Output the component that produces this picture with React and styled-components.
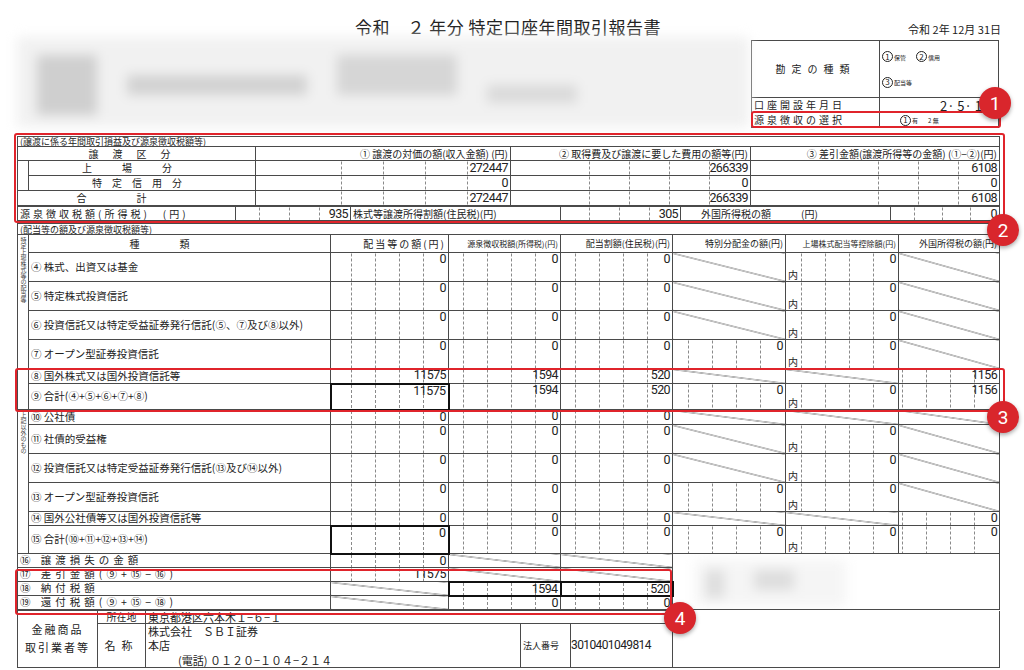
import React from 'react';
import styled, { createGlobalStyle, css } from 'styled-components';

const Global = createGlobalStyle`
  body { margin: 0; background: #fff; }
  * { box-sizing: border-box; }
`;

const font = `"Noto Sans CJK JP", "Noto Sans", sans-serif`;
const line = '#4a4a4a';

const dashBg = (n, step) => {
  const k = Array.from({ length: n }, (_, i) => i + 1);
  return css`
    background-image: ${k.map(() => 'linear-gradient(#8a8a8a 55%, transparent 0)').join(',')};
    background-size: ${k.map(() => '1px 5px').join(',')};
    background-position: ${k.map(i => `calc(100% - ${i * step}px) 0`).join(',')};
    background-repeat: repeat-y;
  `;
};

const diag = css`
  background: linear-gradient(to top right, transparent calc(50% - 0.7px), #555 50%, transparent calc(50% + 0.7px));
`;

const Page = styled.div`
  position: relative;
  width: 1024px;
  height: 670px;
  overflow: hidden;
  padding-left: 17px;
  font-family: ${font};
  color: #222;
`;

const Head = styled.div`
  position: relative;
  width: 982px;
  height: 37px;
  display: flex;
  align-items: flex-end;
  justify-content: flex-end;
`;

const Title = styled.h1`
  position: absolute;
  left: 0;
  right: 0;
  top: 14px;
  margin: 0;
  text-align: center;
  font-size: 17px;
  font-weight: 400;
  letter-spacing: 0.5px;
`;

const DateText = styled.div`
  font-size: 11px;
  margin-right: -2px;
`;

const TopRow = styled.div`
  display: flex;
  width: 982px;
  height: 90px;
  gap: 2px;
`;

const Blur = styled.div`
  width: 733px;
  height: 90px;
  background: #f1f1f1;
  overflow: hidden;
  filter: blur(6px);
  display: flex;
  gap: 30px;
  padding: 18px 20px;
`;

const Blob = styled.div`
  width: ${p => p.$w}px;
  height: ${p => p.$h}px;
  background: ${p => p.$c || '#c9c9c9'};
  margin-top: ${p => p.$t || 0}px;
`;

const Table = styled.table`
  border-collapse: collapse;
  table-layout: fixed;
  width: ${p => p.$w || 982}px;
  font-size: 10px;
  border: 1px solid ${line};
  margin-top: ${p => p.$mt || 0}px;
`;

const Row = styled.tr`
  height: ${p => p.$h}px;
`;

const Cell = styled.td`
  border: ${p => (p.$bold ? 2 : 1)}px solid ${p => (p.$bold ? '#111' : line)};
  padding: 0 2px;
  line-height: 1;
  vertical-align: ${p => p.$va || 'middle'};
  text-align: ${p => p.$align || 'left'};
  white-space: nowrap;
  overflow: hidden;
  letter-spacing: ${p => p.$ls || 0}px;
  ${p => p.$dash && dashBg(p.$dash, p.$step || 24)}
  ${p => p.$diag && diag}
`;

const Num = styled.div`
  font-family: "Roboto", "DejaVu Sans", sans-serif;
  font-size: 12.5px;
  letter-spacing: -0.6px;
  text-align: right;
  line-height: 12px;
`;

const NumBox = styled.div`
  display: flex;
  flex-direction: column;
  justify-content: space-between;
  height: ${p => p.$h - 2}px;
`;

const Nai = styled.span`
  font-size: 10px;
  line-height: 10px;
`;

const VLabel = styled.div`
  writing-mode: vertical-rl;
  font-size: 6px;
  line-height: 8px;
  margin: 2px auto;
  color: #444;
`;

const Circ = styled.span`
  display: inline-flex;
  align-items: center;
  justify-content: center;
  width: 11px;
  height: 11px;
  border: 1px solid #222;
  border-radius: 50%;
  font-size: 8px;
  margin-right: 1px;
`;

const Tiny = styled.span`
  font-size: 6px;
  margin-right: 10px;
`;

const Mark = styled.div`
  position: absolute;
  left: ${p => p.$x}px;
  top: ${p => p.$y}px;
  width: ${p => p.$w}px;
  height: ${p => p.$h}px;
  border: 2px solid #e0242b;
  border-radius: 3px;
  pointer-events: none;
`;

const Badge = styled.div`
  position: absolute;
  left: ${p => p.$x - 16}px;
  top: ${p => p.$y - 16}px;
  width: 32px;
  height: 32px;
  border-radius: 50%;
  background: #d9262c;
  color: #fff;
  font-family: "Roboto", sans-serif;
  font-size: 19px;
  display: flex;
  align-items: center;
  justify-content: center;
  box-shadow: 0 2px 4px rgba(0,0,0,.35);
`;

const Info = () => (
  <Table $w={247} style={{ height: 88, marginTop: 3 }}>
    <colgroup><col width={128} /><col width={119} /></colgroup>
    <tbody>
      <Row $h={57}>
        <Cell $align="center" $ls={6}>勘定の種類</Cell>
        <Cell>
          <div><Circ>1</Circ><Tiny>保管</Tiny><Circ>2</Circ><Tiny>信用</Tiny></div>
          <div style={{ marginTop: 14 }}><Circ>3</Circ><Tiny>配当等</Tiny></div>
        </Cell>
      </Row>
      <Row $h={15}>
        <Cell $ls={3}>口座開設年月日</Cell>
        <Cell $align="right" style={{ fontSize: 13, paddingRight: 16 }}>2· 5· 1</Cell>
      </Row>
      <Row $h={15}>
        <Cell $ls={3}>源泉徴収の選択</Cell>
        <Cell style={{ paddingLeft: 20 }}><Circ>1</Circ><Tiny>有</Tiny><Tiny>2 無</Tiny></Cell>
      </Row>
    </tbody>
  </Table>
);

const N = ({ v, h, nai }) => (
  <NumBox $h={h}>
    <Num>{v}</Num>
    {nai && <Nai>内</Nai>}
  </NumBox>
);

const Transfer = () => (
  <>
    <Table $mt={9} style={{ borderBottom: 'none' }}>
      <colgroup><col width={11} /><col width={227} /><col width={255} /><col width={240} /><col width={249} /></colgroup>
      <tbody>
        <Row $h={10}><Cell colSpan={5} style={{ fontSize: 9 }}>(譲渡に係る年間取引損益及び源泉徴収税額等)</Cell></Row>
        <Row $h={14}>
          <Cell colSpan={2} $align="center" $ls={14}>譲渡区分</Cell>
          <Cell $align="right">① 譲渡の対価の額(収入金額) (円)</Cell>
          <Cell $align="right">② 取得費及び譲渡に要した費用の額等(円)</Cell>
          <Cell $align="right">③ 差引金額(譲渡所得等の金額) (①−②)(円)</Cell>
        </Row>
        {[['上場分', '272447', '266339', '6108', 30], ['特定信用分', '0', '0', '0', 10], ['合計', '272447', '266339', '6108', 50]].map(([l, a, b, c, ls], i) => (
          <Row $h={15} key={l}>
            {i === 0 && <Cell rowSpan={2} style={{ borderBottom: 'none' }} />}
            {i === 2 ? (
              <Cell colSpan={2} $align="center" $ls={ls}>{l}</Cell>
            ) : (
              <Cell $align="center" $ls={ls}>{l}</Cell>
            )}
            <Cell $dash={4} $step={42}><Num>{a}</Num></Cell>
            <Cell $dash={4} $step={40}><Num>{b}</Num></Cell>
            <Cell $dash={3} $step={40}><Num>{c}</Num></Cell>
          </Row>
        ))}
      </tbody>
    </Table>
    <Table>
      <colgroup><col width={218} /><col width={115} /><col width={210} /><col width={120} /><col width={210} /><col width={109} /></colgroup>
      <tbody>
        <Row $h={14}>
          <Cell $ls={3}>源泉徴収税額(所得税)　(円)</Cell>
          <Cell $dash={3} $step={30}><Num>935</Num></Cell>
          <Cell>株式等譲渡所得割額(住民税)(円)</Cell>
          <Cell $dash={3} $step={30}><Num>305</Num></Cell>
          <Cell style={{ paddingLeft: 20 }}>外国所得税の額　　　(円)</Cell>
          <Cell $dash={3} $step={28}><Num>0</Num></Cell>
        </Row>
      </tbody>
    </Table>
  </>
);

// cell codes: 'd' diagonal, 'B' bold-framed number, 'n' number with 内
const rows = [
  ['④ 株式、出資又は基金', 29, ['0', '0', '0', 'd', 'n0', 'd']],
  ['⑤ 特定株式投資信託', 29, ['0', '0', '0', 'd', 'n0', 'd']],
  ['⑥ 投資信託又は特定受益証券発行信託(⑤、⑦及び⑧以外)', 29, ['0', '0', '0', 'd', 'n0', 'd']],
  ['⑦ オープン型証券投資信託', 29, ['0', '0', '0', '0', 'n0', 'd']],
  ['⑧ 国外株式又は国外投資信託等', 15, ['11575', '1594', '520', 'd', 'd', '1156']],
  ['⑨ 合計(④+⑤+⑥+⑦+⑧)', 26, ['B11575', '1594', '520', '0', 'n0', '1156']],
  ['⑩ 公社債', 15, ['0', '0', '0', 'd', 'd', 'd']],
  ['⑪ 社債的受益権', 29, ['0', '0', '0', 'd', 'n0', 'd']],
  ['⑫ 投資信託又は特定受益証券発行信託(⑬及び⑭以外)', 29, ['0', '0', '0', 'd', 'n0', 'd']],
  ['⑬ オープン型証券投資信託', 29, ['0', '0', '0', '0', 'n0', 'd']],
  ['⑭ 国外公社債等又は国外投資信託等', 14, ['0', '0', '0', 'd', 'd', '0']],
  ['⑮ 合計(⑩+⑪+⑫+⑬+⑭)', 28, ['B0', '0', '0', '0', 'n0', '0']],
];

const ValueCell = ({ code, h }) => {
  if (code === 'd') return <Cell $diag />;
  const bold = code.startsWith('B');
  const nai = code.startsWith('n');
  const v = code.replace(/^[Bn]/, '');
  return (
    <Cell $dash={4} $step={24} $bold={bold} $va="top">
      <N v={v} h={h} nai={nai} />
    </Cell>
  );
};

const Dividend = () => (
  <Table $mt={2}>
    <colgroup>
      <col width={11} /><col width={302} /><col width={118} /><col width={112} /><col width={112} />
      <col width={113} /><col width={113} /><col width={101} />
    </colgroup>
    <tbody>
      <Row $h={11}><Cell colSpan={8} style={{ fontSize: 9 }}>(配当等の額及び源泉徴収税額等)</Cell></Row>
      <Row $h={18}>
        <Cell rowSpan={7} $va="top" style={{ padding: 0 }}><VLabel>特定上場株式等の配当等</VLabel></Cell>
        <Cell $align="center" $ls={40}>種類</Cell>
        <Cell $align="right" $ls={2}>配当等の額(円)</Cell>
        <Cell $align="right" style={{ fontSize: 8 }}>源泉徴収税額(所得税)(円)</Cell>
        <Cell $align="right" style={{ fontSize: 9 }}>配当割額(住民税)(円)</Cell>
        <Cell $align="right" style={{ fontSize: 9 }}>特別分配金の額(円)</Cell>
        <Cell $align="right" style={{ fontSize: 8 }}>上場株式配当等控除額(円)</Cell>
        <Cell $align="right" style={{ fontSize: 9 }}>外国所得税の額(円)</Cell>
      </Row>
      {rows.map(([label, h, cells], i) => (
        <Row $h={h} key={label}>
          {i === 6 && (
            <Cell rowSpan={6} $va="top" style={{ padding: 0 }}><VLabel>上記以外のもの</VLabel></Cell>
          )}
          <Cell style={{ fontSize: 10.5 }}>{label}</Cell>
          {cells.map((c, j) => <ValueCell code={c} h={h} key={j} />)}
        </Row>
      ))}
      {[
        ['⑯ 譲渡損失の金額', ['0', 'd', 'd']],
        ['⑰ 差引金額(⑨+⑮−⑯)', ['11575', 'd', 'd']],
        ['⑱ 納付税額', ['d', 'B1594', 'B520']],
        ['⑲ 還付税額(⑨+⑮−⑱)', ['d', '0', '0']],
      ].map(([label, cells], i) => (
        <Row $h={14} key={label}>
          <Cell colSpan={2} $ls={4} style={{ fontSize: 10.5 }}>{label}</Cell>
          {cells.map((c, j) => <ValueCell code={c} h={14} key={j} />)}
          {i === 0 && (
            <Cell colSpan={3} rowSpan={4} $va="top">
              <Blur style={{ width: 150, height: 46, marginLeft: 20, marginTop: 6, background: '#f5f5f5', padding: 10 }}>
                <Blob $w={18} $h={28} $c="#ddd" />
                <Blob $w={40} $h={20} $c="#ddd" />
              </Blur>
            </Cell>
          )}
        </Row>
      ))}
    </tbody>
  </Table>
);

const Footer = () => (
  <Table style={{ borderTop: 'none' }}>
    <colgroup><col width={80} /><col width={48} /><col width={375} /><col width={50} /><col width={102} /><col width={327} /></colgroup>
    <tbody>
      <Row $h={13}>
        <Cell rowSpan={2} $align="center" $ls={2} style={{ fontSize: 11, lineHeight: 1.6 }}>金融商品<br />取引業者等</Cell>
        <Cell $align="center">所在地</Cell>
        <Cell colSpan={3} style={{ fontSize: 11 }}>東京都港区六本木１−６−１</Cell>
        <Cell rowSpan={2} style={{ borderTop: 'none' }} />
      </Row>
      <Row $h={42}>
        <Cell $align="center" $ls={6} style={{ fontSize: 11 }}>名称</Cell>
        <Cell $va="top" style={{ fontSize: 11, lineHeight: 1.3 }}>
          株式会社　ＳＢＩ証券<br />本店<br />
          <span style={{ paddingLeft: 30 }}>(電話) ０１２０−１０４−２１４</span>
        </Cell>
        <Cell style={{ fontSize: 9 }}>法人番号</Cell>
        <Cell style={{ padding: 0 }}><Num style={{ textAlign: 'left', fontSize: 12 }}>3010401049814</Num></Cell>
      </Row>
    </tbody>
  </Table>
);

export default function App() {
  return (
    <Page>
      <Global />
      <Head>
        <Title>令和　２ 年分 特定口座年間取引報告書</Title>
        <DateText>令和 2年 12月 31日</DateText>
      </Head>
      <TopRow>
        <Blur>
          <Blob $w={60} $h={60} $c="#cfcfcf" />
          <Blob $w={180} $h={20} $c="#d2d2d2" $t={20} />
          <Blob $w={120} $h={40} $c="#d6d6d6" />
          <Blob $w={90} $h={18} $c="#dadada" $t={30} />
        </Blur>
        <Info />
      </TopRow>
      <Transfer />
      <Dividend />
      <Footer />

      <Mark $x={751} $y={111} $w={250} $h={17} />
      <Badge $x={995} $y={103}>1</Badge>
      <Mark $x={14} $y={133} $w={991} $h={90} />
      <Badge $x={1003} $y={230}>2</Badge>
      <Mark $x={15} $y={368} $w={990} $h={44} />
      <Badge $x={1003} $y={417}>3</Badge>
      <Mark $x={15} $y={569} $w={657} $h={46} />
      <Badge $x={680} $y={618}>4</Badge>
    </Page>
  );
}
